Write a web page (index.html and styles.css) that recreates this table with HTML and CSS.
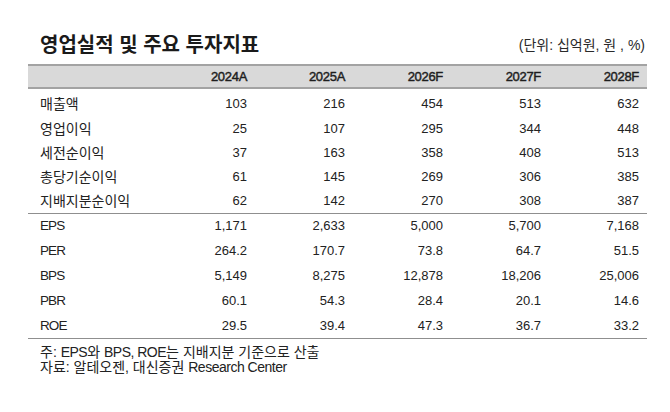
FILE: index.html
```html
<!DOCTYPE html>
<html lang="ko">
<head>
<meta charset="utf-8">
<link rel="stylesheet" href="styles.css">
</head>
<body>
<div class="page">
  <div class="title-row">
    <h1 class="title">영업실적 및 주요 투자지표</h1>
    <span class="unit">(단위: 십억원, 원 , %)</span>
  </div>
  <table class="data">
    <colgroup>
      <col class="c-label"><col class="c-num"><col class="c-num"><col class="c-num"><col class="c-num"><col class="c-num">
    </colgroup>
    <thead>
      <tr><th></th><th>2024A</th><th>2025A</th><th>2026F</th><th>2027F</th><th>2028F</th></tr>
    </thead>
    <tbody class="sec1">
      <tr class="first"><td>매출액</td><td>103</td><td>216</td><td>454</td><td>513</td><td>632</td></tr>
      <tr><td>영업이익</td><td>25</td><td>107</td><td>295</td><td>344</td><td>448</td></tr>
      <tr><td>세전순이익</td><td>37</td><td>163</td><td>358</td><td>408</td><td>513</td></tr>
      <tr><td>총당기순이익</td><td>61</td><td>145</td><td>269</td><td>306</td><td>385</td></tr>
      <tr><td>지배지분순이익</td><td>62</td><td>142</td><td>270</td><td>308</td><td>387</td></tr>
    </tbody>
    <tbody class="sec2">
      <tr><td class="lat">EPS</td><td>1,171</td><td>2,633</td><td>5,000</td><td>5,700</td><td>7,168</td></tr>
      <tr><td class="lat">PER</td><td>264.2</td><td>170.7</td><td>73.8</td><td>64.7</td><td>51.5</td></tr>
      <tr><td class="lat">BPS</td><td>5,149</td><td>8,275</td><td>12,878</td><td>18,206</td><td>25,006</td></tr>
      <tr><td class="lat">PBR</td><td>60.1</td><td>54.3</td><td>28.4</td><td>20.1</td><td>14.6</td></tr>
      <tr><td class="lat">ROE</td><td>29.5</td><td>39.4</td><td>47.3</td><td>36.7</td><td>33.2</td></tr>
    </tbody>
  </table>
  <div class="notes">
    <p>주: <span class="lat-n">EPS</span>와 <span class="lat-n">BPS, ROE</span>는 지배지분 기준으로 산출</p>
    <p>자료: 알테오젠, 대신증권 <span class="lat-n">Research Center</span></p>
  </div>
</div>
</body>
</html>
```
FILE: styles.css
```css
html, body {
  margin: 0;
  padding: 0;
  background: #ffffff;
}
body {
  font-family: "Liberation Sans", "Noto Sans CJK KR", sans-serif;
  color: #222222;
}
.page {
  width: 619px;
  padding: 32px 0 0 28px;
}
.title-row {
  display: flex;
  justify-content: space-between;
  align-items: center;
  height: 24px;
  padding: 0 2px 0 12px;
  margin-bottom: 8px;
}
.title {
  margin: 0;
  font-family: "Noto Sans CJK KR", sans-serif;
  font-size: 20px;
  font-weight: 700;
  line-height: 24px;
  color: #1a1a1a;
}
.unit {
  font-size: 14px;
  line-height: 24px;
  color: #2a2a2a;
  padding-top: 2px;
}
.data {
  width: 619px;
  table-layout: fixed;
  border-collapse: collapse;
  font-size: 13px;
}
.c-label { width: 129px; }
.c-num { width: 98px; }
.data th {
  height: 21px;
  padding: 0 8px 0 0;
  background: #d9d9d9;
  border-top: 2px solid #a3a3a3;
  border-bottom: 2px solid #a3a3a3;
  text-align: right;
  font-weight: 400;
  -webkit-text-stroke: 0.45px #1e1e1e;
  color: #1e1e1e;
  line-height: 21px;
  letter-spacing: -0.3px;
}
.data td {
  padding: 0 8px 0 0;
  text-align: right;
  line-height: 16px;
  white-space: nowrap;
}
.data td:first-child {
  text-align: left;
  padding-left: 12px;
  font-size: 14px;
}
.data td.lat {
  font-family: "Liberation Sans Narrow", "Liberation Sans", sans-serif;
  font-size: 13.5px;
  letter-spacing: -0.9px;
}
.sec1 td { height: 24px; }
.sec1 tr.first td { height: 26px; padding-top: 2px; }
.sec1 tr:last-child td { border-bottom: 1px solid #8f8f8f; }
.sec2 td { height: 24.8px; }
.sec2 tr:last-child td { border-bottom: 1px solid #8f8f8f; }
.notes {
  padding: 6px 0 0 12px;
  font-size: 14px;
  line-height: 15px;
  color: #222222;
}
.notes p {
  margin: 0;
}
.lat-n {
  font-family: "Liberation Sans Narrow", "Liberation Sans", sans-serif;
  letter-spacing: -0.5px;
}
```
